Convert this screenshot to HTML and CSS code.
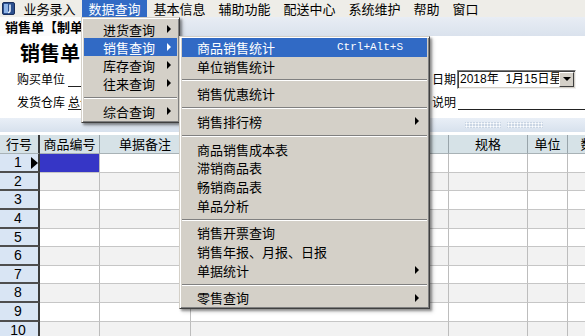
FILE: index.html
```html
<!DOCTYPE html>
<html lang="zh-CN">
<head>
<meta charset="utf-8">
<title>销售单</title>
<link rel="stylesheet" href="styles.css">
</head>
<body>
<div class="app">
  <nav class="menubar">
    <span class="app-icon">
      <svg width="13" height="13" viewBox="0 0 13 13">
        <rect x="0.5" y="0.5" width="12" height="12" rx="1.5" fill="#2b4f8e" stroke="#1a2f5c"/>
        <rect x="2" y="2" width="4" height="9" fill="#8fb4e6"/>
        <path d="M8 2.5 L8 8.5 Q8 10.5 6 10.5" fill="none" stroke="#e8f0fb" stroke-width="1.6"/>
      </svg>
    </span>
    <span class="mb-item">业务录入</span>
    <span class="mb-item active">数据查询</span>
    <span class="mb-item">基本信息</span>
    <span class="mb-item">辅助功能</span>
    <span class="mb-item">配送中心</span>
    <span class="mb-item">系统维护</span>
    <span class="mb-item">帮助</span>
    <span class="mb-item">窗口</span>
  </nav>

  <div class="tabstrip"><div class="tab">销售单【制单】</div></div>

  <section class="form">
    <h1 class="title">销售单</h1>
    <div class="frow">
      <div class="fleft"><span class="lbl">购买单位</span><span class="field"></span></div>
      <div class="fright">
        <span class="lbl">日期</span>
        <div class="combo"><span class="combo-text">2018年&nbsp; 1月15日星期一</span><span class="combo-btn"><span class="down"></span></span></div>
      </div>
    </div>
    <div class="frow">
      <div class="fleft"><span class="lbl">发货仓库</span><span class="field">总仓库</span></div>
      <div class="fright"><span class="lbl">说明</span><span class="field wide"></span></div>
    </div>
  </section>

  <div class="splitter"><span class="grip"></span><span class="grip"></span></div>

  <div class="grid">
    <div class="th rhh">行号</div><div class="th">商品编号</div><div class="th">单据备注</div><div class="th">商品名称</div><div class="th">规格</div><div class="th">单位</div><div class="th">数量</div><div class="th">单价</div>

    <div class="rh cur">1</div><div class="td sel"></div><div class="td"></div><div class="td"></div><div class="td"></div><div class="td"></div><div class="td"></div><div class="td"></div>
    <div class="rh">2</div><div class="td alt"></div><div class="td alt"></div><div class="td alt"></div><div class="td alt"></div><div class="td alt"></div><div class="td alt"></div><div class="td alt"></div>
    <div class="rh">3</div><div class="td"></div><div class="td"></div><div class="td"></div><div class="td"></div><div class="td"></div><div class="td"></div><div class="td"></div>
    <div class="rh">4</div><div class="td alt"></div><div class="td alt"></div><div class="td alt"></div><div class="td alt"></div><div class="td alt"></div><div class="td alt"></div><div class="td alt"></div>
    <div class="rh">5</div><div class="td"></div><div class="td"></div><div class="td"></div><div class="td"></div><div class="td"></div><div class="td"></div><div class="td"></div>
    <div class="rh">6</div><div class="td alt"></div><div class="td alt"></div><div class="td alt"></div><div class="td alt"></div><div class="td alt"></div><div class="td alt"></div><div class="td alt"></div>
    <div class="rh">7</div><div class="td"></div><div class="td"></div><div class="td"></div><div class="td"></div><div class="td"></div><div class="td"></div><div class="td"></div>
    <div class="rh">8</div><div class="td alt"></div><div class="td alt"></div><div class="td alt"></div><div class="td alt"></div><div class="td alt"></div><div class="td alt"></div><div class="td alt"></div>
    <div class="rh">9</div><div class="td"></div><div class="td"></div><div class="td"></div><div class="td"></div><div class="td"></div><div class="td"></div><div class="td"></div>
    <div class="rh">10</div><div class="td alt"></div><div class="td alt"></div><div class="td alt"></div><div class="td alt"></div><div class="td alt"></div><div class="td alt"></div><div class="td alt"></div>
  </div>

  <div class="menu m1">
    <div class="mi">进货查询<span class="arr"></span></div>
    <div class="mi hi">销售查询<span class="arr"></span></div>
    <div class="mi">库存查询<span class="arr"></span></div>
    <div class="mi">往来查询<span class="arr"></span></div>
    <div class="sep"></div>
    <div class="mi">综合查询<span class="arr"></span></div>
  </div>

  <div class="menu m2">
    <div class="mi hi">商品销售统计<span class="key">Ctrl+Alt+S</span></div>
    <div class="mi">单位销售统计</div>
    <div class="sep"></div>
    <div class="mi">销售优惠统计</div>
    <div class="sep"></div>
    <div class="mi">销售排行榜<span class="arr"></span></div>
    <div class="sep"></div>
    <div class="mi">商品销售成本表</div>
    <div class="mi">滞销商品表</div>
    <div class="mi">畅销商品表</div>
    <div class="mi">单品分析</div>
    <div class="sep"></div>
    <div class="mi">销售开票查询</div>
    <div class="mi">销售年报、月报、日报</div>
    <div class="mi">单据统计<span class="arr"></span></div>
    <div class="sep"></div>
    <div class="mi">零售查询<span class="arr"></span></div>
  </div>
</div>
</body>
</html>
```

FILE: styles.css
```css
* { box-sizing: border-box; }
html, body { margin: 0; padding: 0; }
body {
  width: 585px;
  height: 336px;
  overflow: hidden;
  background: #fff;
  font-family: "Noto Sans CJK SC", "Liberation Sans", sans-serif;
  font-size: 13px;
  color: #000;
}
.app { position: relative; width: 585px; height: 336px; overflow: hidden; }

/* menubar */
.menubar { display: flex; height: 17px; background: #eeede8; }
.app-icon { width: 17px; display: flex; align-items: center; justify-content: center; }
.mb-item { padding: 0 6.5px; line-height: 17px; white-space: nowrap; }
.mb-item.active { background: #316ac5; color: #fff; }

/* tab strip */
.tabstrip { height: 19px; background: linear-gradient(#e8edf4, #dae2ed); display: flex; }
.tab { width: 160px; padding-left: 5px; background: #fbfbfb; font-weight: bold; line-height: 19px; white-space: nowrap; overflow: hidden; }

/* form */
.form { height: 81px; padding-top: 5px; background: #fff; }
.title { margin: 0; padding-left: 20px; font-size: 20px; font-weight: bold; line-height: 24px; }
.frow { display: grid; grid-template-columns: 432px 1fr; height: 20px; margin-top: 4px; }
.frow + .frow { margin-top: 3px; }
.fleft, .fright { display: flex; align-items: center; }
.fleft { padding-left: 17px; }
.lbl { font-size: 12px; line-height: 20px; white-space: nowrap; }
.field {
  margin-left: 3px;
  width: 200px;
  height: 16px;
  border-bottom: 1px solid #222;
  font-size: 12px;
  line-height: 15px;
  white-space: nowrap;
}
.field.wide { flex: 1; width: auto; margin-left: 2px; }
.combo {
  margin-left: 1px;
  width: 119px;
  height: 19px;
  display: flex;
  background: #fff;
  border: 1px solid;
  border-color: #7a7a7a #f0f0f0 #f0f0f0 #7a7a7a;
  box-shadow: inset 1px 1px #404040, inset -1px -1px #d4d0c8;
  padding: 1px;
}
.combo-text {
  flex: 1;
  overflow: hidden;
  white-space: nowrap;
  font-family: "Liberation Sans", "Noto Sans CJK SC", sans-serif;
  font-size: 12px;
  line-height: 15px;
  padding-left: 1px;
}
.combo-btn {
  width: 15px;
  background: #d4d0c8;
  border: 1px solid;
  border-color: #fff #404040 #404040 #fff;
  display: flex;
  align-items: center;
  justify-content: center;
}
.down { width: 0; height: 0; border-top: 4px solid #000; border-left: 4px solid transparent; border-right: 4px solid transparent; }

/* splitter */
.splitter {
  height: 14px;
  margin-top: 1px;
  background: linear-gradient(#e9eff7, #d7e1ed);
  display: flex;
  align-items: center;
  padding-left: 465px;
  gap: 6px;
}
.grip {
  width: 36px;
  height: 6px;
  background-color: #c9d5e4;
  background-image: radial-gradient(circle, #fbfdff 0.9px, transparent 1.2px);
  background-size: 3px 3px;
}

/* grid */
.grid {
  margin-top: 3px;
  display: grid;
  grid-template-columns: 40px 60px 91px 258px 79px 40px 52px 80px;
  grid-template-rows: 19px;
  grid-auto-rows: 18.65px;
  width: 700px;
}
.th {
  background: #d6e2e7;
  border-right: 1px solid #98a4aa;
  border-bottom: 1px solid #a8b2b6;
  text-align: center;
  line-height: 18px;
  font-size: 13px;
  white-space: nowrap;
  overflow: hidden;
}
.th.rhh { border-right: 2px solid #3c3c3c; }
.rh {
  position: relative;
  background: #d9e5f4;
  border-right: 2px solid #3c3c3c;
  border-bottom: 2px solid #4e4e4e;
  font-family: "Liberation Sans", sans-serif;
  font-size: 14px;
  line-height: 17px;
  text-align: center;
  padding-right: 2px;
}
.rh.cur::after {
  content: "";
  position: absolute;
  left: 31px;
  top: 3px;
  border-left: 7px solid #000;
  border-top: 6px solid transparent;
  border-bottom: 6px solid transparent;
}
.td { background: #fff; border-right: 1px solid #bdbdbd; border-bottom: 1px solid #c6c6c6; }
.td.alt { background: #f2f2f2; }
.td.sel { background: #3636c6; }

/* popup menus */
.menu {
  position: absolute;
  background: #d4d0c8;
  border: 1px solid;
  border-color: #d4d0c8 #404040 #404040 #d4d0c8;
  box-shadow: inset 1px 1px #fff, inset -1px -1px #808080, 2px 2px 2px rgba(0,0,0,0.35), 3px 3px 4px rgba(0,0,0,0.15);
  display: flex;
  flex-direction: column;
}
.m1 { left: 81px; top: 17px; width: 99px; padding: 2px; }
.m2 { left: 179px; top: 36px; width: 251px; padding: 1px 2px; }
.mi {
  display: flex;
  align-items: center;
  height: 18px;
  white-space: nowrap;
  font-size: 13px;
}
.m1 .mi { padding-left: 19px; }
.m2 .mi { height: 18.7px; padding-left: 15px; }
.mi.hi { background: #316ac5; color: #fff; }
.arr {
  margin-left: auto;
  margin-right: 6px;
  width: 0;
  height: 0;
  border-left: 4px solid #000;
  border-top: 4px solid transparent;
  border-bottom: 4px solid transparent;
}
.m2 .arr { margin-right: 8px; }
.hi .arr { border-left-color: #fff; }
.key {
  margin-left: auto;
  margin-right: 24px;
  font-family: "Liberation Mono", monospace;
  font-size: 11px;
}
.sep { height: 10px; display: flex; flex-direction: column; justify-content: center; }
.m2 .sep { height: 9px; }
.sep::before { content: ""; display: block; height: 1px; background: #808080; box-shadow: 0 1px #fff; }
```
